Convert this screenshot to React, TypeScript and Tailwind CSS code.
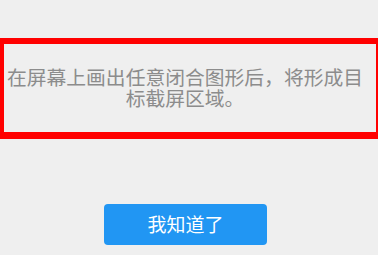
export default function App() {
  return (
    <div
      className="flex h-[255px] w-[378px] flex-col overflow-hidden bg-[#efefef]"
      style={{ fontFamily: '"Noto Sans CJK SC", "Noto Sans", sans-serif' }}
    >
      <div className="mt-[38px] flex h-[101px] items-center justify-center border-t-[6px] border-b-[7px] border-l-[4px] border-r-[2px] border-[#ff0000] pb-[3px] pr-[10px]">
        <p className="text-center text-[19.8px] leading-[21px] text-[#8c8c8c]">
          在屏幕上画出任意闭合图形后，将形成目标截屏区域。
        </p>
      </div>
      <div className="mt-[65px] flex justify-center pr-[7px]">
        <button className="flex h-[41px] w-[163px] items-center justify-center rounded-[4px] bg-[#2196f3] text-[19px] text-white">
          我知道了
        </button>
      </div>
    </div>
  );
}
